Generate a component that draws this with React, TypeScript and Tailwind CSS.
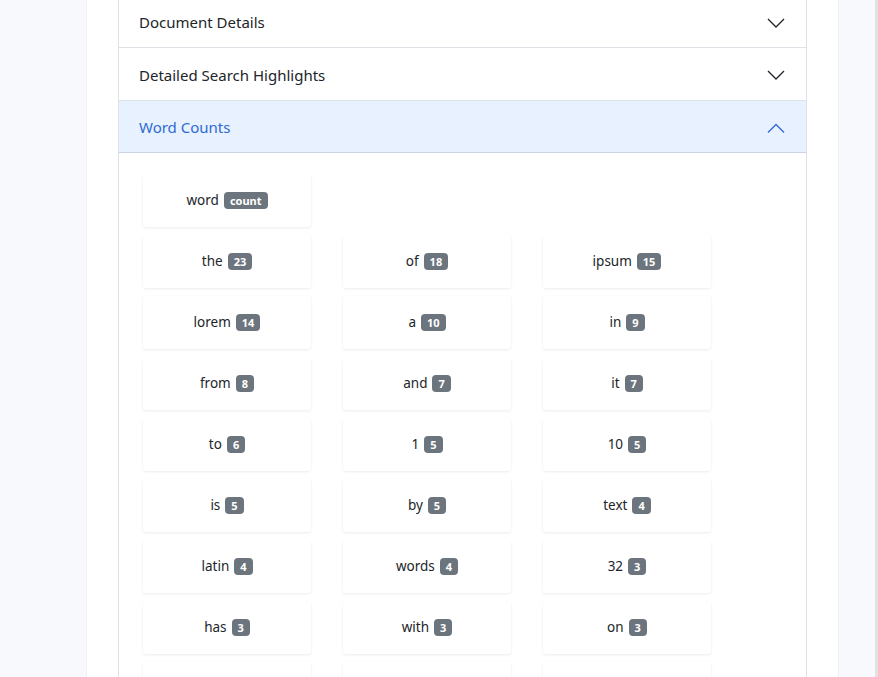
import React from 'react';

const words: [string, number][] = [
  ['the', 23], ['of', 18], ['ipsum', 15],
  ['lorem', 14], ['a', 10], ['in', 9],
  ['from', 8], ['and', 7], ['it', 7],
  ['to', 6], ['1', 5], ['10', 5],
  ['is', 5], ['by', 5], ['text', 4],
  ['latin', 4], ['words', 4], ['32', 3],
  ['has', 3], ['with', 3], ['on', 3],
];

const Chevron: React.FC<{ up?: boolean }> = ({ up }) => (
  <svg width="20" height="20" viewBox="0 0 20 20" fill="none" className={up ? 'text-[#2f6bd3]' : 'text-[#212529]'}>
    {up ? (
      <path d="M2 14.5 L10 6.5 L18 14.5" stroke="currentColor" strokeWidth="1.3" />
    ) : (
      <path d="M2 6 L10 14 L18 6" stroke="currentColor" strokeWidth="1.3" />
    )}
  </svg>
);

const WordCard: React.FC<{ word?: string; count?: string | number }> = ({ word, count }) => (
  <div className="w-[168px] h-[53px] bg-white rounded-[3px] shadow-[0_1px_3px_rgba(0,0,0,0.08)] flex items-center justify-center text-[13.5px] text-[#212529]">
    {word && <span>{word}</span>}
    {count !== undefined && (
      <span className="ml-[5px] bg-[#6c757d] text-white text-[11px] font-bold leading-none px-[6px] py-[3px] rounded-[4px]">
        {count}
      </span>
    )}
  </div>
);

export default function App() {
  return (
    <div className="flex h-[677px] w-[878px] overflow-hidden bg-[#f8f9fc]" style={{ fontFamily: '"Noto Sans", "Open Sans", sans-serif' }}>
      <div className="w-[87px] shrink-0 border-r border-[#eef0f3]" />
      <div className="w-[751px] shrink-0 bg-white px-[31px]">
        <div className="border-x border-[#dee2e6] h-full">
          {/* collapsed items */}
          <div className="h-[48px] flex items-center justify-between px-5 border-b border-[#dee2e6] text-[15px] text-[#212529] pb-[2px]">
            <span>Document Details</span>
            <Chevron />
          </div>
          <div className="h-[53px] flex items-center justify-between px-5 border-b border-[#dee2e6] text-[15px] text-[#212529] pt-[2px]">
            <span>Detailed Search Highlights</span>
            <Chevron />
          </div>
          {/* open item */}
          <div className="h-[52px] flex items-center justify-between px-5 bg-[#e7f1ff] border-b border-[#c9d4e3] text-[15px] text-[#2f6bd3] pt-[2px]">
            <span>Word Counts</span>
            <Chevron up />
          </div>
          <div className="pl-6 pt-[21px]">
            <WordCard word="word" count="count" />
            <div className="grid grid-cols-[168px_168px_168px] gap-x-8 gap-y-2 mt-2">
              {words.map(([w, c], i) => (
                <WordCard key={i} word={w} count={c} />
              ))}
              <WordCard />
              <WordCard />
              <WordCard />
            </div>
          </div>
        </div>
      </div>
      <div className="w-[37px] shrink-0 border-l border-[#eef0f3]" />
      <div className="w-[3px] shrink-0 bg-[#e2e2e2]" />
    </div>
  );
}
